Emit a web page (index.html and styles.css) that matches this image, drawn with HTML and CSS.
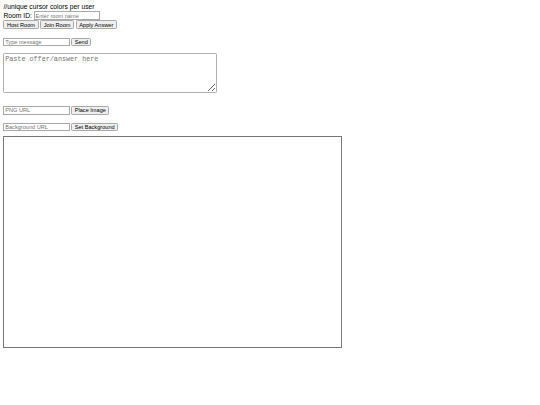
FILE: index.html
```html
<!DOCTYPE html>
<html>
<head>
<meta charset="utf-8">
<link rel="stylesheet" href="styles.css">
</head>
<body>
<div class="page">
  <div class="note">//unique cursor colors per user</div>
  <div class="row room">
    <label class="label">Room ID:</label>
    <input class="field" type="text" placeholder="Enter room name">
  </div>
  <div class="row buttons">
    <button class="btn">Host Room</button>
    <button class="btn">Join Room</button>
    <button class="btn">Apply Answer</button>
  </div>
  <div class="row chat">
    <input class="field" type="text" placeholder="Type message">
    <button class="btn">Send</button>
  </div>
  <textarea class="signal" placeholder="Paste offer/answer here"></textarea>
  <div class="row image-row">
    <input class="field" type="text" placeholder="PNG URL">
    <button class="btn">Place Image</button>
  </div>
  <div class="row bg-row">
    <input class="field" type="text" placeholder="Background URL">
    <button class="btn">Set Background</button>
  </div>
  <div class="board"></div>
</div>
</body>
</html>
```

FILE: styles.css
```css
html, body {
  margin: 0;
  padding: 0;
  background: #fff;
}
.page {
  zoom: 0.421875;
  padding: 8px;
  font-family: "Liberation Sans", Arial, sans-serif;
  font-size: 16px;
  color: #000;
}
.note {
  line-height: 18px;
}
.row {
  display: flex;
  align-items: center;
  gap: 4px;
}
.room {
  margin-top: 1px;
}
.buttons {
  margin-top: 0;
}
.field {
  width: 148px;
  font-family: "Liberation Sans", Arial, sans-serif;
  font-size: 13.33px;
  border: 2px solid #a9a9a9;
}
.btn {
  font-family: "Liberation Sans", Arial, sans-serif;
  font-size: 13.33px;
  background: #efefef;
  border: 2px solid #a9a9a9;
  border-radius: 3px;
  padding: 1px 6px;
}
.chat {
  margin-top: 20px;
}
.signal {
  display: block;
  margin-top: 16px;
  width: 498px;
  height: 86px;
  font-family: "Liberation Mono", monospace;
  font-size: 16px;
  border: 2px solid #b0b0b0;
  border-radius: 3px;
}
.image-row {
  margin-top: 30px;
}
.bg-row {
  margin-top: 19px;
}
.board {
  margin-top: 11px;
  width: 798px;
  height: 497px;
  border: 1px solid #777;
}
```
